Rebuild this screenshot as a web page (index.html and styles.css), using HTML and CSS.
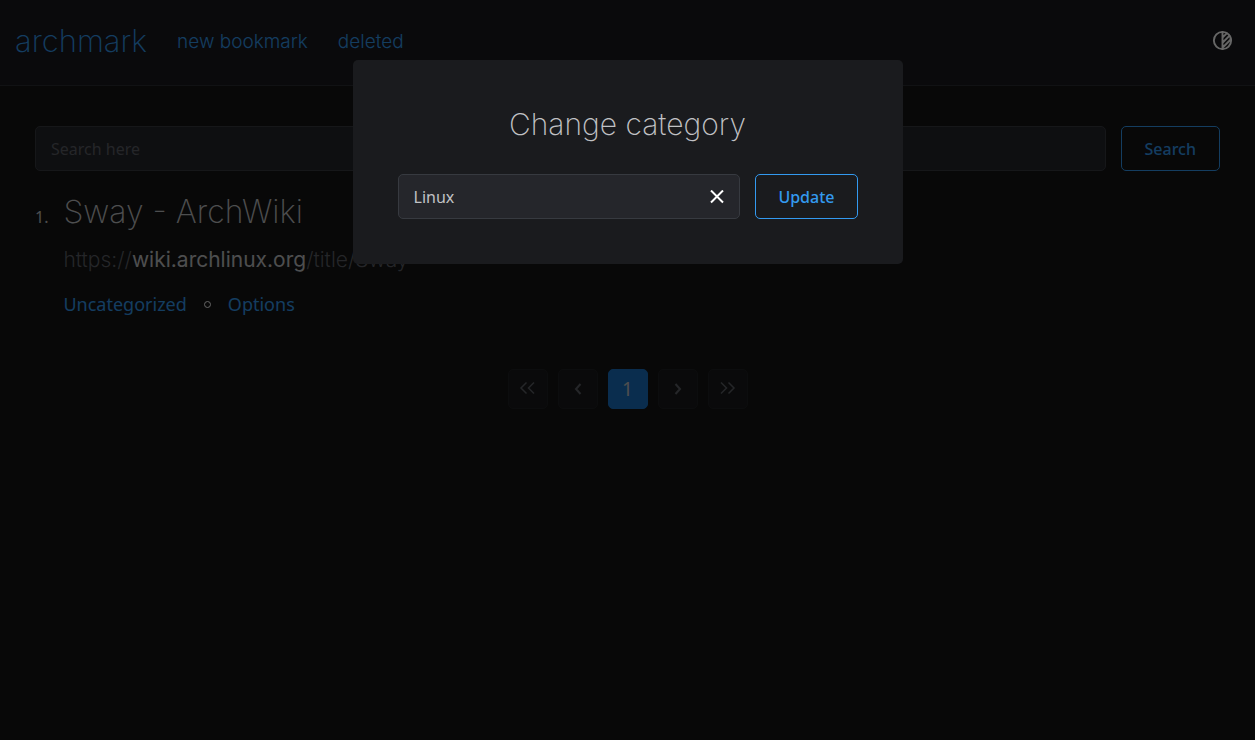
FILE: index.html
```html
<!DOCTYPE html>
<html lang="en">
<head>
<meta charset="utf-8">
<meta name="viewport" content="width=device-width, initial-scale=1">
<title>archmark</title>
<link rel="stylesheet" href="styles.css">
</head>
<body>
<header class="header">
  <a class="brand" href="#">archmark</a>
  <nav class="nav">
    <a class="nav-link" href="#">new bookmark</a>
    <a class="nav-link" href="#">deleted</a>
  </nav>
  <button class="theme" type="button" aria-label="Toggle theme">
    <svg width="23" height="23" viewBox="0 0 24 24" fill="none" stroke="currentColor" stroke-width="2" stroke-linecap="round" stroke-linejoin="round" aria-hidden="true">
      <circle cx="12" cy="12" r="9"/>
      <path d="M12 3v18M12 9l4.65-4.65M12 14.300l7.370-7.370M12 19.600l8.850-8.850"/>
    </svg>
  </button>
</header>
<main class="main">
  <form class="search">
    <input class="field" type="text" placeholder="Search here" aria-label="Search">
    <button class="button search-button" type="button">Search</button>
  </form>
  <article class="bookmark">
    <span class="number">1.</span>
    <div class="details">
      <h2 class="title">Sway - ArchWiki</h2>
      <a class="url" href="#">https://<span class="host">wiki.archlinux.org</span>/title/Sway</a>
      <div class="meta">
        <a href="#">Uncategorized</a>
        <span class="dot"></span>
        <a href="#">Options</a>
      </div>
    </div>
  </article>
  <nav class="pagination" aria-label="Pages">
    <button class="page" type="button" aria-label="First page" disabled><svg width="20" height="20" viewBox="0 0 20 20" aria-hidden="true"><path d="M8.500 3.500L3 9L8.500 14.500M16 3.500L10.500 9l5.500 5.500"/></svg></button>
    <button class="page" type="button" aria-label="Previous page" disabled><svg class="bold" width="20" height="20" viewBox="0 0 20 20" aria-hidden="true"><path d="M12.500 5L8 10L12.500 15"/></svg></button>
    <button class="page current" type="button">1</button>
    <button class="page" type="button" aria-label="Next page" disabled><svg class="bold" width="20" height="20" viewBox="0 0 20 20" aria-hidden="true"><path d="M7.500 5L12 10L7.500 15"/></svg></button>
    <button class="page" type="button" aria-label="Last page" disabled><svg width="20" height="20" viewBox="0 0 20 20" aria-hidden="true"><path d="M3 3.500L8.500 9l-5.500 5.500M10.500 3.500L16 9L10.500 14.500"/></svg></button>
  </nav>
</main>
<div class="overlay">
  <section class="modal" role="dialog" aria-modal="true" aria-labelledby="modal-title">
    <h1 class="modal-title" id="modal-title">Change category</h1>
    <form class="modal-form">
      <div class="field category">
        <input class="category-input" type="text" value="Linux" aria-label="Category">
        <button class="clear" type="button" aria-label="Clear">
          <svg width="14" height="14" viewBox="0 0 14 14" fill="none" stroke="currentColor" stroke-width="2" aria-hidden="true"><path d="M1 0.500l12 12M13 0.500L1 12.500"/></svg>
        </button>
      </div>
      <button class="button update" type="button">Update</button>
    </form>
  </section>
</div>
</body>
</html>
```
FILE: styles.css
```css
* {
  box-sizing: border-box;
}

body {
  margin: 0;
  min-height: 100vh;
  background: #141414;
  color: #c1c2c5;
  font-family: "Noto Sans", sans-serif;
  font-size: 16px;
}

a {
  color: #339af0;
  text-decoration: none;
}

button,
input {
  font: inherit;
  color: inherit;
}

button {
  padding: 0;
  border: 0;
  background: none;
}

.header {
  display: flex;
  align-items: center;
  min-height: 86px;
  padding: 0 21px 4px 15px;
  border-bottom: 1px solid #2c2e33;
  background: #1a1b1e;
  font-family: Inter, sans-serif;
  font-weight: 200;
}

.brand {
  font-size: 31px;
}

.nav {
  display: flex;
  flex: 1;
  gap: 30px;
  margin-left: 30px;
  padding-top: 2px;
}

.nav-link {
  font-size: 19px;
  font-weight: 300;
}

.theme {
  display: flex;
  color: #fff;
}

.main {
  padding: 40px 35px;
}

.search {
  display: flex;
  gap: 15px;
}

.field {
  flex: 1;
  min-width: 0;
  height: 45px;
  padding: 0 15px;
  border: 1px solid #373a40;
  border-radius: 5px;
  background: #25262b;
}

.field::placeholder {
  color: #5c5f66;
  opacity: 1;
}

.button {
  height: 45px;
  border: 1px solid #339af0;
  border-radius: 5px;
  color: #339af0;
  font-weight: 500;
}

.search-button {
  padding: 0 23px;
}

.bookmark {
  display: flex;
  gap: 15px;
  margin-top: 20px;
}

.number {
  padding-top: 14px;
  line-height: 24px;
}

.title {
  margin: 0;
  font: 200 32px/41px Inter, sans-serif;
}

.url {
  display: block;
  margin-top: 13px;
  color: #5c5f66;
  font: 300 21px/30px Inter, sans-serif;
}

.host {
  color: #c1c2c5;
  font-weight: 400;
}

.meta {
  display: flex;
  align-items: center;
  gap: 17px;
  margin-top: 14px;
  font-size: 18px;
  line-height: 30px;
}

.dot {
  width: 7px;
  height: 7px;
  border: 1px solid #fff;
  border-radius: 50%;
}

.pagination {
  display: flex;
  justify-content: center;
  gap: 10px;
  margin-top: 50px;
}

.page {
  display: flex;
  align-items: center;
  justify-content: center;
  width: 40px;
  height: 40px;
  border: 1px solid #202124;
  border-radius: 5px;
  background: #1a1b1c;
  color: #5c5f66;
}

.page svg {
  fill: none;
  stroke: currentColor;
  stroke-width: 1.5;
}

.page .bold {
  stroke-width: 2;
}

.current {
  border-color: #1971c2;
  background: #1971c2;
  color: #c1c2c5;
  font-size: 19px;
}

.overlay {
  position: fixed;
  inset: 0;
  display: flex;
  align-items: flex-start;
  justify-content: center;
  padding: 60px 15px;
  background: rgba(0, 0, 0, 0.6);
}

.modal {
  width: 100%;
  max-width: 550px;
  padding: 45px;
  border-radius: 5px;
  background: #1a1b1e;
}

.modal-title {
  margin: 0 0 30px;
  font: 200 30px/39px Inter, sans-serif;
  text-align: center;
}

.modal-form {
  display: flex;
  gap: 15px;
}

.category {
  display: flex;
  align-items: center;
}

.category-input {
  flex: 1;
  min-width: 0;
  padding: 0;
  border: 0;
  outline: 0;
  background: none;
}

.clear {
  display: flex;
  color: #fff;
}

.update {
  padding: 0 22px;
}
```
